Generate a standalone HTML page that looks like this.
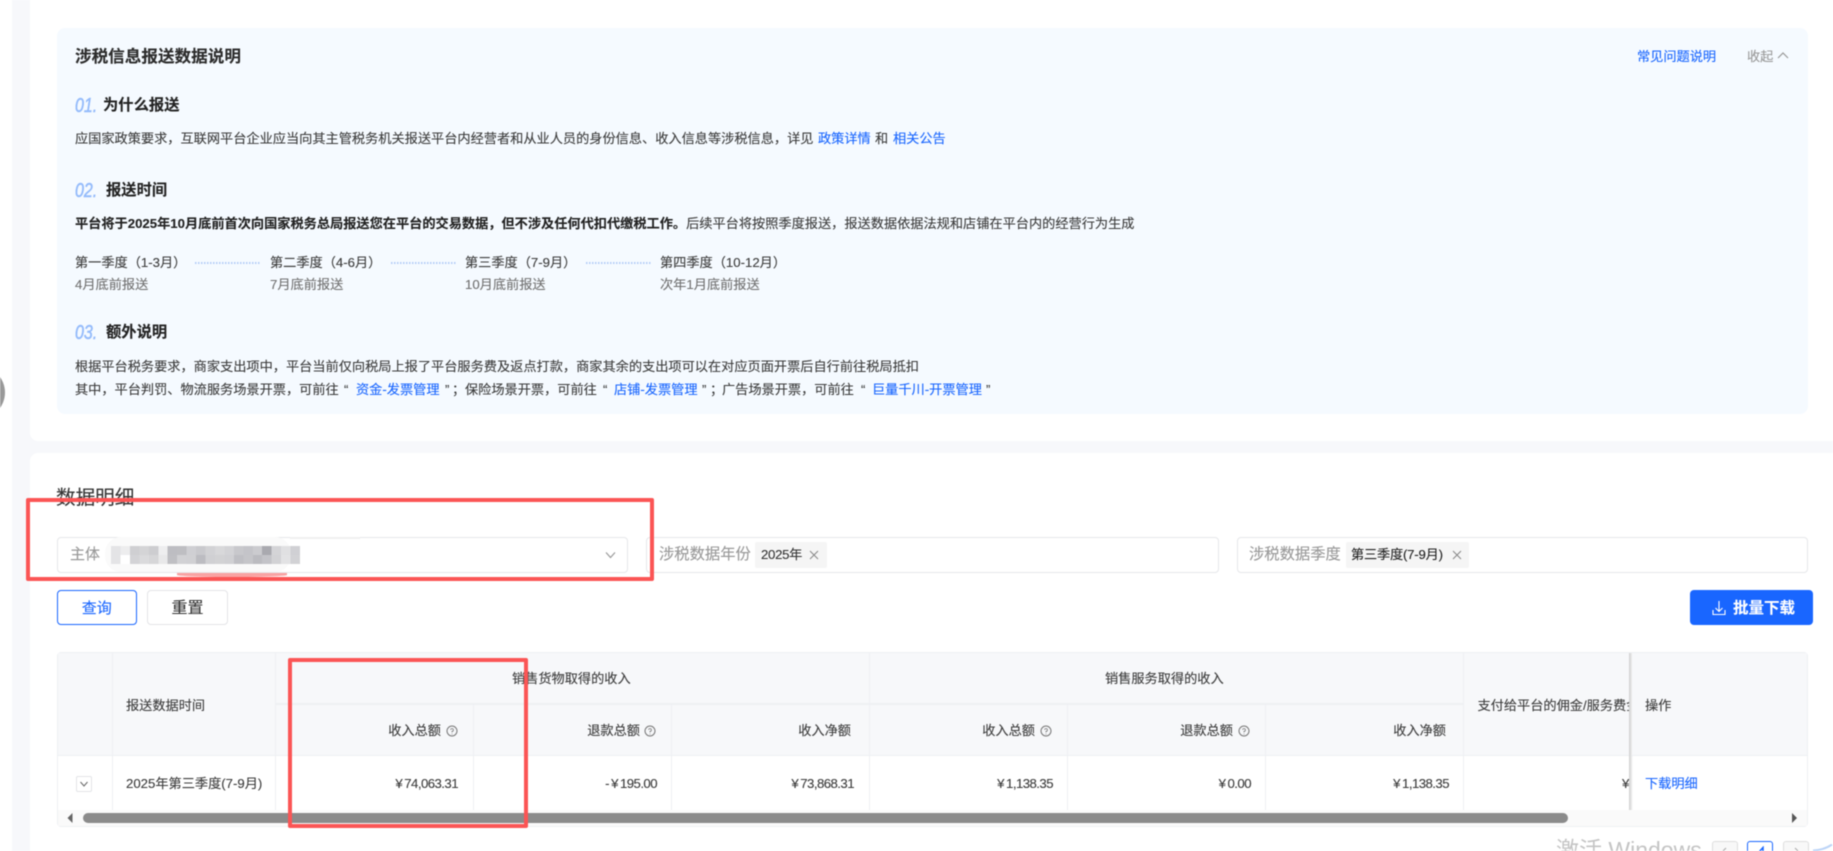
<!DOCTYPE html>
<html lang="zh-CN">
<head>
<meta charset="utf-8">
<title>涉税信息报送数据说明</title>
<style>
html,body{margin:0;padding:0;width:1833px;height:851px;overflow:hidden;background:#fff}
#p{position:relative;width:1833px;height:851px;overflow:hidden;background:#f7f8fb;font-family:"Liberation Sans","Noto Sans CJK SC",sans-serif;color:#333;filter:blur(.4px)}
#p div,#p a,#p svg{position:absolute}
.t{white-space:nowrap;line-height:20px;height:20px;font-size:13.2px;color:#3c3c3c;-webkit-text-stroke:.12px currentColor}
.b{font-weight:700;color:#222}
.h{font-weight:700;font-size:15.3px;color:#222}
.n{font-style:italic;font-size:20px;color:#94bbfb;font-family:"Liberation Sans",sans-serif;font-weight:400;line-height:24px;height:24px;transform:scaleX(.8);transform-origin:0 50%;-webkit-text-stroke:.5px #94bbfb}
span.l{color:#1966ff}
.lk{color:#1966ff}
.g{color:#707070}
.sel{border:1.5px solid #e6e7ea;border-radius:4px;background:#fff;box-sizing:border-box;height:36px;top:537px}
.tag{background:#f5f5f5;top:542px;height:26px;border-radius:2px}
.r{text-align:right;color:#3c3c3c}
.m{letter-spacing:-.55px;word-spacing:-1px}
.ln{background:#eef0f3}
.dot{height:2px;top:261.5px;width:66px;background:repeating-linear-gradient(90deg,#b4cdf8 0,#b4cdf8 1.5px,transparent 1.5px,transparent 3px)}
.red{border:4px solid #fb5555;box-sizing:border-box;border-radius:2px}
</style>
</head>
<body>
<div id="p">
  <!-- left strip -->
  <div style="left:0;top:0;width:12px;height:851px;background:#fff"></div>
  <div style="left:-48px;top:366px;width:53px;height:53px;border-radius:50%;background:#999"></div>

  <!-- top card -->
  <div style="left:30px;top:-10px;width:1820px;height:451px;background:#fff;border-radius:8px"></div>
  <div style="left:56.5px;top:28px;width:1751.5px;height:386px;background:#f5faff;border-radius:8px"></div>

  <div class="t" style="left:75px;top:46.5px;font-size:16.6px;font-weight:700;color:#2c2c2c">涉税信息报送数据说明</div>
  <div class="t lk" style="left:1637px;top:47px">常见问题说明</div>
  <div class="t" style="left:1747px;top:47px;color:#999">收起</div>
  <svg style="left:1776px;top:50px" width="14" height="10" viewBox="0 0 14 10"><path d="M2 8L7 3l5 5" fill="none" stroke="#999" stroke-width="1.2"/></svg>

  <div class="n" style="left:75px;top:94px">01.</div>
  <div class="t h" style="left:103px;top:96px">为什么报送</div>
  <div class="t" style="left:75px;top:129px">应国家政策要求，互联网平台企业应当向其主管税务机关报送平台内经营者和从业人员的身份信息、收入信息等涉税信息，详见</div>
  <div class="t lk" style="left:818px;top:129px">政策详情</div>
  <div class="t" style="left:875px;top:129px">和</div>
  <div class="t lk" style="left:893px;top:129px">相关公告</div>

  <div class="n" style="left:75px;top:179px">02.</div>
  <div class="t h" style="left:106px;top:181px">报送时间</div>
  <div class="t" style="left:75px;top:214px"><span style="font-weight:700;color:#222">平台将于2025年10月底前首次向国家税务总局报送您在平台的交易数据，但不涉及任何代扣代缴税工作。</span>后续平台将按照季度报送，报送数据依据法规和店铺在平台内的经营行为生成</div>

  <div class="t" style="left:75px;top:253px">第一季度（1-3月）</div>
  <div class="dot" style="left:195px"></div>
  <div class="t" style="left:270px;top:253px">第二季度（4-6月）</div>
  <div class="dot" style="left:391px"></div>
  <div class="t" style="left:465px;top:253px">第三季度（7-9月）</div>
  <div class="dot" style="left:586px"></div>
  <div class="t" style="left:660px;top:253px">第四季度（10-12月）</div>
  <div class="t g" style="left:75px;top:275px">4月底前报送</div>
  <div class="t g" style="left:270px;top:275px">7月底前报送</div>
  <div class="t g" style="left:465px;top:275px">10月底前报送</div>
  <div class="t g" style="left:660px;top:275px">次年1月底前报送</div>

  <div class="n" style="left:75px;top:321px">03.</div>
  <div class="t h" style="left:106px;top:323px">额外说明</div>
  <div class="t" style="left:75px;top:357px">根据平台税务要求，商家支出项中，平台当前仅向税局上报了平台服务费及返点打款，商家其余的支出项可以在对应页面开票后自行前往税局抵扣</div>
  <div class="t" style="left:75px;top:380px">其中，平台判罚、物流服务场景开票，可前往</div>
  <div class="t" style="left:344px;top:380px">“</div>
  <div class="t lk" style="left:356px;top:380px">资金-发票管理</div>
  <div class="t" style="left:445px;top:380px">”</div>
  <div class="t" style="left:452px;top:380px">；</div>
  <div class="t" style="left:465px;top:380px">保险场景开票，可前往</div>
  <div class="t" style="left:603px;top:380px">“</div>
  <div class="t lk" style="left:614px;top:380px">店铺-发票管理</div>
  <div class="t" style="left:702px;top:380px">”</div>
  <div class="t" style="left:710px;top:380px">；</div>
  <div class="t" style="left:722px;top:380px">广告场景开票，可前往</div>
  <div class="t" style="left:861px;top:380px">“</div>
  <div class="t lk" style="left:872px;top:380px">巨量千川-开票管理</div>
  <div class="t" style="left:986px;top:380px">”</div>

  <!-- bottom card -->
  <div style="left:30px;top:453px;width:1820px;height:420px;background:#fff;border-radius:8px"></div>
  <div class="t" style="left:56px;top:487.5px;font-size:19.6px;color:#333">数据明细</div>

  <!-- selects -->
  <div class="sel" style="left:56.5px;width:571.5px"></div>
  <div class="t" style="left:70px;top:545px;font-size:15px;color:#999">主体</div>
  <svg style="left:604px;top:550px" width="13" height="10" viewBox="0 0 13 10"><path d="M2 2.5l4.5 5 4.5-5" fill="none" stroke="#999" stroke-width="1.2"/></svg>

  <div class="sel" style="left:646px;width:573px"></div>
  <div class="t" style="left:659px;top:545px;font-size:15.3px;color:#999">涉税数据年份</div>
  <div class="tag" style="left:755px;width:72px"></div>
  <div class="t" style="left:761px;top:545px;color:#333;letter-spacing:-.3px">2025年</div>
  <svg style="left:808px;top:549px" width="12" height="12" viewBox="0 0 12 12"><path d="M2 2l8 8M10 2l-8 8" stroke="#888" stroke-width="1"/></svg>

  <div class="sel" style="left:1237px;width:571px"></div>
  <div class="t" style="left:1249px;top:545px;font-size:15.3px;color:#999">涉税数据季度</div>
  <div class="tag" style="left:1346px;width:123px"></div>
  <div class="t" style="left:1351px;top:545px;color:#222;letter-spacing:-.2px">第三季度(7-9月)</div>
  <svg style="left:1451px;top:549px" width="12" height="12" viewBox="0 0 12 12"><path d="M2 2l8 8M10 2l-8 8" stroke="#888" stroke-width="1"/></svg>

  <!-- buttons -->
  <div class="t" style="left:56.5px;top:590px;width:80.5px;height:35px;line-height:35px;box-sizing:border-box;border:1.5px solid #1966ff;border-radius:4px;text-align:center;font-size:15px;color:#1966ff">查询</div>
  <div class="t" style="left:147px;top:590px;width:81px;height:35px;line-height:35px;box-sizing:border-box;border:1.5px solid #e3e4e7;border-radius:4px;text-align:center;font-size:16px;color:#333">重置</div>
  <div style="left:1690px;top:590px;width:123px;height:35px;background:#1966ff;border-radius:4px"></div>
  <svg style="left:1710px;top:599px" width="18" height="18" viewBox="0 0 18 18"><path d="M9 2v10M5.5 9L9 12.5 12.5 9M3 11v4.5h12V11" fill="none" stroke="#fff" stroke-width="1.1"/></svg>
  <div class="t" style="left:1733px;top:598.5px;font-size:15.5px;font-weight:700;color:#fff">批量下载</div>

  <!-- table -->
  <div style="left:57px;top:652px;width:1751px;height:175px;box-sizing:border-box;border:1px solid #eef0f3;border-radius:4px;background:#fff"></div>
  <div style="left:58px;top:653px;width:1749px;height:103px;background:#f7f8fa"></div>
  <div class="ln" style="left:58px;top:755px;width:1749px;height:1px"></div>
  <div class="ln" style="left:275px;top:703px;width:1188px;height:1.5px"></div>
  <div class="ln" style="left:112px;top:653px;width:1px;height:157px"></div>
  <div class="ln" style="left:275px;top:653px;width:1px;height:157px"></div>
  <div class="ln" style="left:869px;top:653px;width:1px;height:157px"></div>
  <div class="ln" style="left:1463px;top:653px;width:1px;height:157px"></div>
  <div class="ln" style="left:473px;top:704px;width:1px;height:106px"></div>
  <div class="ln" style="left:671px;top:704px;width:1px;height:106px"></div>
  <div class="ln" style="left:1067px;top:704px;width:1px;height:106px"></div>
  <div class="ln" style="left:1265px;top:704px;width:1px;height:106px"></div>

  <div class="t" style="left:126px;top:696px">报送数据时间</div>
  <div class="t" style="left:512px;top:669px">销售货物取得的收入</div>
  <div class="t" style="left:1105px;top:669px">销售服务取得的收入</div>

  <div class="t r" style="left:341px;width:100px;top:721px">收入总额</div>
  <div class="t r" style="left:540px;width:100px;top:721px">退款总额</div>
  <div class="t r" style="left:751px;width:100px;top:721px">收入净额</div>
  <div class="t r" style="left:935px;width:100px;top:721px">收入总额</div>
  <div class="t r" style="left:1133px;width:100px;top:721px">退款总额</div>
  <div class="t r" style="left:1346px;width:100px;top:721px">收入净额</div>
  <svg style="left:446px;top:725px" width="12" height="12" viewBox="0 0 12 12"><circle cx="6" cy="6" r="5" fill="none" stroke="#777"/><path d="M4.6 4.8a1.4 1.4 0 1 1 1.4 1.6v1M6 8.6v.8" fill="none" stroke="#777" stroke-width=".8"/></svg>
  <svg style="left:644px;top:725px" width="12" height="12" viewBox="0 0 12 12"><circle cx="6" cy="6" r="5" fill="none" stroke="#777"/><path d="M4.6 4.8a1.4 1.4 0 1 1 1.4 1.6v1M6 8.6v.8" fill="none" stroke="#777" stroke-width=".8"/></svg>
  <svg style="left:1040px;top:725px" width="12" height="12" viewBox="0 0 12 12"><circle cx="6" cy="6" r="5" fill="none" stroke="#777"/><path d="M4.6 4.8a1.4 1.4 0 1 1 1.4 1.6v1M6 8.6v.8" fill="none" stroke="#777" stroke-width=".8"/></svg>
  <svg style="left:1238px;top:725px" width="12" height="12" viewBox="0 0 12 12"><circle cx="6" cy="6" r="5" fill="none" stroke="#777"/><path d="M4.6 4.8a1.4 1.4 0 1 1 1.4 1.6v1M6 8.6v.8" fill="none" stroke="#777" stroke-width=".8"/></svg>

  <div style="left:75.5px;top:775.5px;width:16.5px;height:16.5px;box-sizing:border-box;border:1px solid #e3e4e7;border-radius:2px;background:#fff"></div>
  <svg style="left:78px;top:779px" width="12" height="10" viewBox="0 0 12 10"><path d="M2.5 3l3.5 4 3.5-4" fill="none" stroke="#666" stroke-width="1"/></svg>
  <div class="t" style="left:126px;top:774px">2025年第三季度(7-9月)</div>
  <div class="t r m" style="left:338px;width:120px;top:774px">¥ 74,063.31</div>
  <div class="t r m" style="left:537px;width:120px;top:774px">- ¥ 195.00</div>
  <div class="t r m" style="left:734px;width:120px;top:774px">¥ 73,868.31</div>
  <div class="t r m" style="left:933px;width:120px;top:774px">¥ 1,138.35</div>
  <div class="t r m" style="left:1131px;width:120px;top:774px">¥ 0.00</div>
  <div class="t r m" style="left:1329px;width:120px;top:774px">¥ 1,138.35</div>

  <div class="t" style="left:1477.5px;top:696px;width:151px;overflow:hidden">支付给平台的佣金/服务费金额</div>
  <div class="t" style="left:1622px;top:774px">¥</div>

  <!-- fixed op column -->
  <div style="left:1628.5px;top:653px;width:4px;height:157px;background:linear-gradient(90deg,#cfcfcf,#e4e4e4 50%,rgba(255,255,255,0))"></div>
  <div style="left:1632px;top:653px;width:175px;height:102px;background:#f7f8fa"></div>
  <div style="left:1632px;top:755px;width:175px;height:1px;background:#eef0f3"></div>
  <div class="t" style="left:1645px;top:696px">操作</div>
  <div class="t lk" style="left:1645px;top:774px">下载明细</div>

  <!-- scrollbar -->
  <div style="left:58px;top:810px;width:1749px;height:16px;background:#fafafa"></div>
  <div style="left:83px;top:813px;width:1485px;height:10px;border-radius:5px;background:#8b8b8b"></div>
  <svg style="left:67px;top:813px" width="7" height="10" viewBox="0 0 7 10"><path d="M5.5 0v10L0.5 5z" fill="#666"/></svg>
  <svg style="left:1791px;top:813px" width="7" height="10" viewBox="0 0 7 10"><path d="M1 0v10l5-5z" fill="#555"/></svg>

  <!-- bottom right -->
  <div class="t" style="left:1556px;top:837px;font-size:23px;line-height:26px;height:26px;color:#c4c4c4;-webkit-text-stroke:0">激活 Windows</div>
  <div style="left:1712px;top:841px;width:26px;height:26px;box-sizing:border-box;border:1px solid #dedede;border-radius:3px;background:#f8f8f8"></div>
  <div style="left:1747px;top:841px;width:26px;height:26px;box-sizing:border-box;border:1.5px solid #1966ff;border-radius:3px;background:#fff"></div>
  <div style="left:1783px;top:841px;width:26px;height:26px;box-sizing:border-box;border:1px solid #dedede;border-radius:3px;background:#f8f8f8"></div>
  <svg style="left:1722px;top:847px" width="6" height="4" viewBox="0 0 6 4"><path d="M1 4l3-3" fill="none" stroke="#aaa" stroke-width="1"/></svg>
  <svg style="left:1758px;top:846px" width="8" height="6" viewBox="0 0 8 6"><path d="M1 6l4-4.5V6" fill="none" stroke="#1966ff" stroke-width="1.5"/></svg>
  <svg style="left:1793px;top:847px" width="6" height="4" viewBox="0 0 6 4"><path d="M2 1l3 3" fill="none" stroke="#aaa" stroke-width="1"/></svg>
  <svg style="left:1812px;top:844px" width="21" height="7" viewBox="0 0 21 7"><path d="M1 6.5Q12 6 20 .5" fill="none" stroke="#bcd4f7" stroke-width="2"/></svg>

  <!-- annotations -->
  <div class="red" style="left:26px;top:498px;width:628px;height:83px"></div>
  <div class="red" style="left:288px;top:658px;width:240px;height:170px"></div>

  <!-- redaction smear -->
  <div style="left:177px;top:573px;width:110px;height:4px;background:#f9a2a2;border-radius:0 0 50% 50%"></div>
  <div style="left:105px;top:537px;width:186px;height:35px;background:#fafafa;border-radius:16px"></div>
  <div style="left:290px;top:537px;width:70px;height:1.5px;background:#f0f0f0"></div>
  <svg style="left:111px;top:546px" width="189" height="18" viewBox="0 0 20 2" preserveAspectRatio="none" shape-rendering="crispEdges">
    <g>
      <rect x="0" y="0" width="1" height="1" fill="#e4e4e6"/><rect x="1" y="0" width="1" height="1" fill="#ededee"/><rect x="2" y="0" width="1" height="1" fill="#cfcfd2"/><rect x="3" y="0" width="1" height="1" fill="#d4d4d6"/><rect x="4" y="0" width="1" height="1" fill="#cdcdd0"/><rect x="5" y="0" width="1" height="1" fill="#eeeeef"/><rect x="6" y="0" width="1" height="1" fill="#bdbdc2"/><rect x="7" y="0" width="1" height="1" fill="#bebec2"/><rect x="8" y="0" width="1" height="1" fill="#cfcfd3"/><rect x="9" y="0" width="1" height="1" fill="#c9c9cd"/><rect x="10" y="0" width="1" height="1" fill="#d2d2d5"/><rect x="11" y="0" width="1" height="1" fill="#d8d8da"/><rect x="12" y="0" width="1" height="1" fill="#d3d3d6"/><rect x="13" y="0" width="1" height="1" fill="#c8c8cc"/><rect x="14" y="0" width="1" height="1" fill="#c4c4c9"/><rect x="15" y="0" width="1" height="1" fill="#cbcbcf"/><rect x="16" y="0" width="1" height="1" fill="#a9a9af"/><rect x="17" y="0" width="1" height="1" fill="#d4d4d7"/><rect x="18" y="0" width="1" height="1" fill="#e0e0e2"/><rect x="19" y="0" width="1" height="1" fill="#d0d0d4"/>
      <rect x="0" y="1" width="1" height="1" fill="#e4e4e6"/><rect x="1" y="1" width="1" height="1" fill="#fff"/><rect x="2" y="1" width="1" height="1" fill="#d3d3d6"/><rect x="3" y="1" width="1" height="1" fill="#dadadc"/><rect x="4" y="1" width="1" height="1" fill="#d6d6d8"/><rect x="5" y="1" width="1" height="1" fill="#e8e8e9"/><rect x="6" y="1" width="1" height="1" fill="#bfbfc3"/><rect x="7" y="1" width="1" height="1" fill="#d1d1d4"/><rect x="8" y="1" width="1" height="1" fill="#d0d0d3"/><rect x="9" y="1" width="1" height="1" fill="#bcbcc1"/><rect x="10" y="1" width="1" height="1" fill="#d0d0d3"/><rect x="11" y="1" width="1" height="1" fill="#d2d2d4"/><rect x="12" y="1" width="1" height="1" fill="#d0d0d3"/><rect x="13" y="1" width="1" height="1" fill="#bfbfc4"/><rect x="14" y="1" width="1" height="1" fill="#c5c5c9"/><rect x="15" y="1" width="1" height="1" fill="#bbbbc0"/><rect x="16" y="1" width="1" height="1" fill="#c3c3c8"/><rect x="17" y="1" width="1" height="1" fill="#d2d2d5"/><rect x="18" y="1" width="1" height="1" fill="#e2e2e4"/><rect x="19" y="1" width="1" height="1" fill="#d2d2d5"/>
    </g>
  </svg>
</div>
</body>
</html>
